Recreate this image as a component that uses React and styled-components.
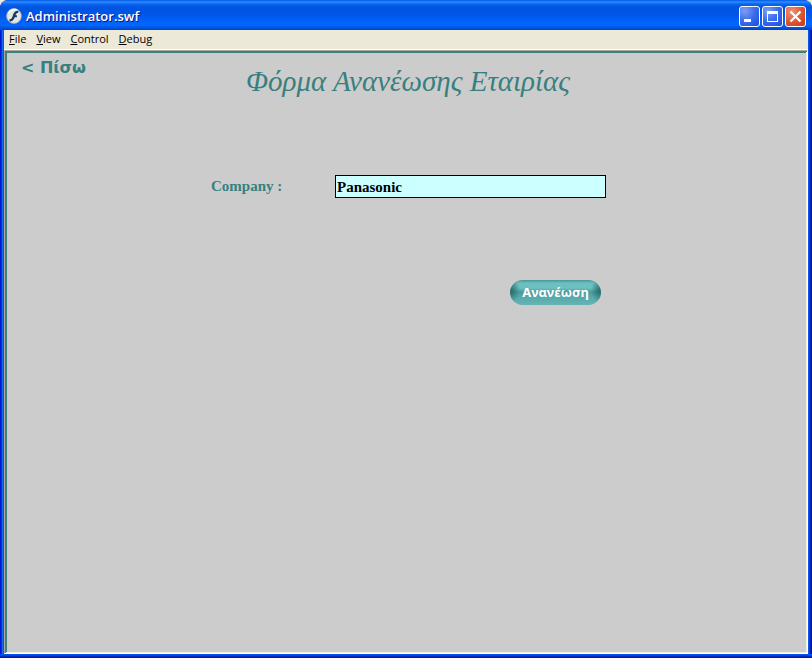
import React from "react";
import styled, { createGlobalStyle } from "styled-components";

const teal = "#37807f";

const GlobalStyle = createGlobalStyle`
  * { box-sizing: border-box; }
  body { margin: 0; background: #ece9d8; }
  button, input { font: inherit; }
`;

const WindowFrame = styled.div`
  min-height: 100vh;
  display: flex;
  flex-direction: column;
  padding: 0 4px 4px;
  border-radius: 8px 8px 0 0;
  background: #0831d9;
  background-image:
    linear-gradient(to top, #001ba0 0 1px, #0028c0 1px 2px, #0840e0 2px 3px, #0855ee 3px 4px, transparent 4px),
    linear-gradient(to right, #0019cf 0 1px, #0831d9 1px 2px, #166aee 2px 3px, #0855dd 3px 4px, transparent 4px),
    linear-gradient(to left, #001590 0 1px, #0022b4 1px 2px, #0040dc 2px 3px, #0855ee 3px 4px, transparent 4px);
  overflow: hidden;
`;

const TitleBar = styled.header`
  display: flex;
  align-items: center;
  height: 30px;
  margin: 0 -4px;
  padding: 2px 6px 0;
  gap: 4px;
  border-radius: 8px 8px 0 0;
  background: linear-gradient(
    #0058e6 0, #2f8cff 2px, #0a66ee 4px, #0054e3 7px, #0055e5 14px,
    #0062fa 21px, #0067ff 25px, #005be8 27px, #0040c8 30px
  );
`;

const WindowTitle = styled.span`
  flex: 1;
  color: #fff;
  font: 600 13px/20px "Open Sans", sans-serif;
  text-shadow: 1px 1px #0f1089;
`;

const WindowButtons = styled.div`
  display: flex;
  gap: 2px;
`;

const WindowButton = styled.button`
  width: 21px;
  height: 21px;
  padding: 0;
  border: 1px solid #fff;
  border-radius: 3px;
  background: ${(p) =>
    p.$close
      ? "radial-gradient(circle at 30% 25%, #ee9478, #e0532f 55%, #c23a14)"
      : "radial-gradient(circle at 25% 20%, #7c9ef2, #3a6bec 50%, #1a4fdc)"};
  svg { display: block; }
`;

const MenuBar = styled.nav`
  display: flex;
  align-items: center;
  gap: 10px;
  height: 20px;
  padding: 0 5px 1px;
  background: #ece9d8;
  border-bottom: 1px solid #fff;
`;

const MenuItem = styled.button`
  padding: 0;
  border: 0;
  background: none;
  color: #000;
  font: 11px/16px "Open Sans", sans-serif;
`;

const Stage = styled.main`
  flex: 1;
  display: flex;
  flex-direction: column;
  background: #ccc;
  border: 1px solid;
  border-color: #aca899 #fff #fff #aca899;
  box-shadow:
    inset 1px 1px #716f64,
    inset -1px -1px #f1efe2,
    inset 2px 2px ${teal};
  padding: 6px 16px 24px 16px;
`;

const PageHeader = styled.div`
  display: grid;
  grid-template-columns: 1fr auto 1fr;
  align-items: start;
`;

const BackLink = styled.a`
  justify-self: start;
  color: ${teal};
  font: bold 16px/22px "DejaVu Sans", sans-serif;
  text-decoration: none;
`;

const PageTitle = styled.h1`
  margin: 6px 0 0 4px;
  color: ${teal};
  font: italic 29px/36px "Liberation Serif", serif;
`;

const CompanyForm = styled.form`
  display: flex;
  flex-direction: column;
  gap: 82px;
  width: 400px;
  max-width: 100%;
  margin: 76px auto 0;
  padding-left: 5px;
`;

const Field = styled.div`
  display: grid;
  grid-template-columns: 124px 1fr;
  align-items: center;
  font: bold 15px/21px "Liberation Serif", serif;
`;

const FieldLabel = styled.label`
  color: ${teal};
`;

const TextInput = styled.input`
  width: 100%;
  height: 23px;
  padding: 1px 1px 0;
  border: 1px solid #000;
  border-radius: 0;
  background: #cff;
  color: #000;
`;

const SubmitButton = styled.button`
  align-self: flex-end;
  width: 91px;
  height: 25px;
  margin-right: 5px;
  padding: 0 0 2px;
  border: 0;
  border-radius: 13px;
  color: #fff;
  font: bold 13px/20px "Noto Sans", sans-serif;
  white-space: nowrap;
  background:
    radial-gradient(ellipse 10px 13px at 0 40%, #236666, transparent),
    radial-gradient(ellipse 10px 13px at 100% 40%, #236666, transparent),
    linear-gradient(#4a9494, #6cc0c0 3px 8px, #4a9a9a 12px, #57aaaa 17px, #64b4b4);
`;

function FlashIcon() {
  return (
    <svg width="16" height="16" viewBox="0 0 16 16" aria-hidden="true">
      <circle cx="8" cy="8" r="7.4" fill="#e3e5e6" stroke="#a5b0ba" strokeWidth="0.8" />
      <path d="M2.5 5A6.5 6.5 0 0 1 12 2.8" fill="none" stroke="#fff" strokeWidth="1.4" />
      <path
        d="M12.3 2.6C8.8 2.8 7.6 5.2 6.8 7.8C6.1 10.2 5.3 11.2 3.5 11.5V13.6C6.9 13.5 8 11.3 8.7 9.3H10.9V7.3H9.4C10 5.8 10.7 4.8 12.3 4.7Z"
        fill="#143b56"
      />
    </svg>
  );
}

const glyphs = {
  Minimize: <path d="M4 12h7v3H4z" fill="#fff" />,
  Maximize: <path d="M4 4h11v11H4zM5 7v7h9V7z" fill="#fff" fillRule="evenodd" />,
  Close: <path d="M4.5 4.5l10 10M14.5 4.5l-10 10" stroke="#fff" strokeWidth="2.2" />,
};

const menus = ["File", "View", "Control", "Debug"];

export default function App() {
  return (
    <>
      <GlobalStyle />
      <WindowFrame>
        <TitleBar>
          <FlashIcon />
          <WindowTitle>Administrator.swf</WindowTitle>
          <WindowButtons>
            {Object.entries(glyphs).map(([name, glyph]) => (
              <WindowButton key={name} type="button" aria-label={name} $close={name === "Close"}>
                <svg width="19" height="19" viewBox="0 0 19 19">{glyph}</svg>
              </WindowButton>
            ))}
          </WindowButtons>
        </TitleBar>
        <MenuBar>
          {menus.map((name) => (
            <MenuItem key={name} type="button">
              <u>{name[0]}</u>{name.slice(1)}
            </MenuItem>
          ))}
        </MenuBar>
        <Stage>
          <PageHeader>
            <BackLink href="#back">&lt; Πίσω</BackLink>
            <PageTitle>Φόρμα Ανανέωσης Εταιρίας</PageTitle>
          </PageHeader>
          <CompanyForm onSubmit={(e) => e.preventDefault()}>
            <Field>
              <FieldLabel htmlFor="company">Company :</FieldLabel>
              <TextInput id="company" name="company" defaultValue="Panasonic" />
            </Field>
            <SubmitButton type="submit">Ανανέωση</SubmitButton>
          </CompanyForm>
        </Stage>
      </WindowFrame>
    </>
  );
}
